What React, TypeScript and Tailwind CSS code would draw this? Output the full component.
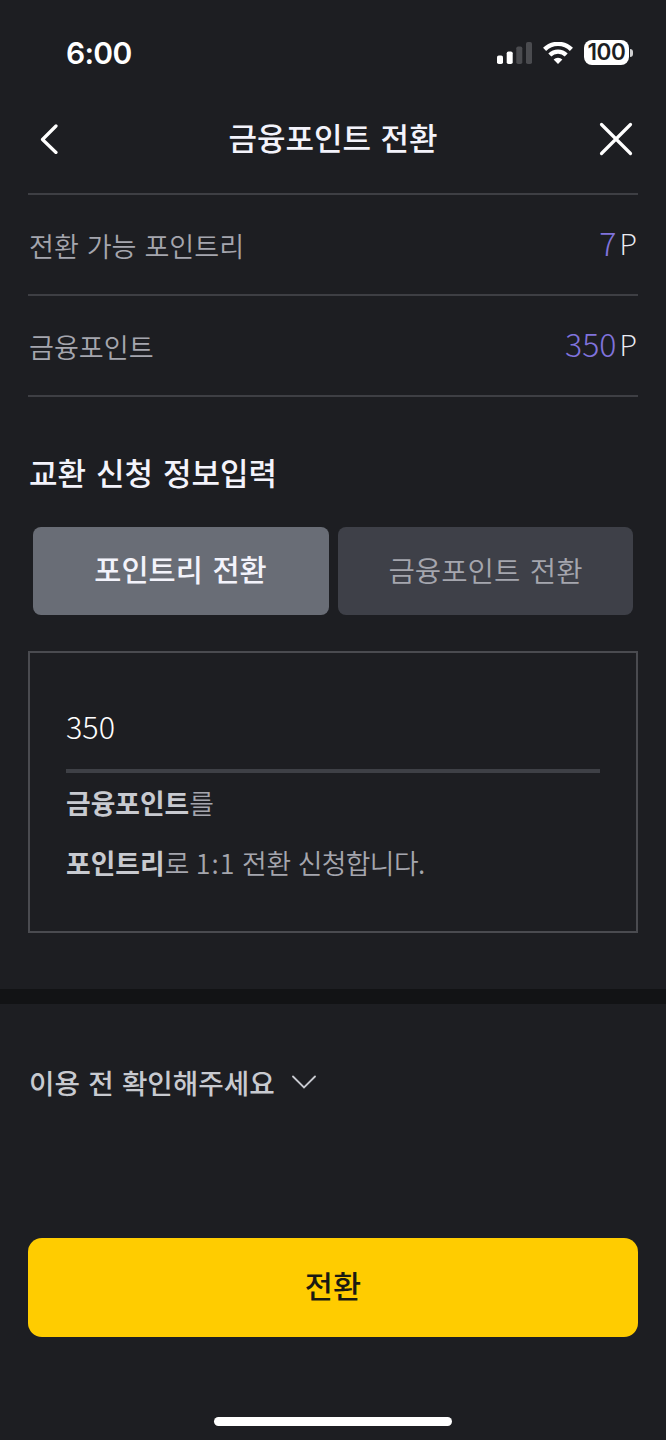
import { clsx } from 'clsx';
import { useState } from 'react';

const balances = [
  { label: '전환 가능 포인트리', value: '7' },
  { label: '금융포인트', value: '350' },
];

function StatusBar() {
  return (
    <div className="flex h-[84px] items-center justify-between pt-[21px] pr-[33px] pl-[66px]">
      <span className="font-['Inter'] text-[30px] leading-none font-semibold tracking-[-0.7px] text-white">6:00</span>
      <div className="flex items-center">
        <svg className="h-[22px] w-[35px]" viewBox="0 0 35 22">
          <rect x="0" y="13.5" width="6" height="8.5" rx="1.8" fill="#fff" />
          <rect x="9.7" y="9.5" width="6" height="12.5" rx="1.8" fill="#fff" />
          <rect x="19.3" y="4.5" width="6" height="17.5" rx="1.8" fill="#4a4b4f" />
          <rect x="29" y="0" width="6" height="22" rx="1.8" fill="#4a4b4f" />
        </svg>
        <svg className="ml-[11px] h-[22px] w-[30px]" viewBox="0 0 30 22" fill="none">
          <path d="M1.6 7.4a19 19 0 0 1 26.8 0" stroke="#fff" strokeWidth="4.4" />
          <path d="M6.8 13.1a11.6 11.6 0 0 1 16.4 0" stroke="#fff" strokeWidth="4.2" />
          <path d="M15 22l-4.4-4.4a6.2 6.2 0 0 1 8.8 0z" fill="#fff" />
        </svg>
        <div className="ml-[11px] flex h-[25px] w-[45px] items-center justify-center rounded-[8px] bg-white font-['Inter'] text-[22.5px] leading-none font-semibold tracking-[-0.4px] text-[#1d1e22]">
          100
        </div>
        <div className="ml-px h-[8px] w-[3px] rounded-r-full bg-[#d0d0d2]" />
      </div>
    </div>
  );
}

function Header() {
  return (
    <header className="flex h-[109px] items-center justify-between pr-[33px] pl-[40px]">
      <button aria-label="뒤로">
        <svg className="h-[30px] w-[26px]" viewBox="0 0 26 30" fill="none">
          <path d="M16 2L2.5 15.5L16 28.5" stroke="#fff" strokeWidth="3.2" strokeLinecap="round" strokeLinejoin="round" />
        </svg>
      </button>
      <h1 className="pb-[4px] pl-px text-[31px] leading-none font-medium [word-spacing:2.5px] text-[#f3f3fb]">
        금융포인트 전환
      </h1>
      <button aria-label="닫기">
        <svg className="h-[34px] w-[34px]" viewBox="0 0 34 34" fill="none">
          <path d="M2.5 2.5L31.5 31.5M31.5 2.5L2.5 31.5" stroke="#fff" strokeWidth="3.2" strokeLinecap="round" />
        </svg>
      </button>
    </header>
  );
}

export default function App() {
  const [tab, setTab] = useState(0);
  const tabs = ['포인트리 전환', '금융포인트 전환'];

  return (
    <div className="flex h-[1440px] w-[666px] flex-col overflow-hidden bg-[#1d1e22] font-['Noto_Sans_CJK_KR',sans-serif]">
      <StatusBar />
      <Header />

      {/* Balances */}
      <section className="mx-[28px] border-t-2 border-[#3e3f44]">
        {balances.map((item) => (
          <div key={item.label} className="flex h-[101px] items-center justify-between border-b-2 border-[#3e3f44]">
            <span className="pt-[3px] pl-px text-[27.1px] leading-none font-[350] [word-spacing:1.8px] text-[#a5a6ae]">
              {item.label}
            </span>
            <span className="flex items-baseline pr-px pb-[3px] leading-none">
              <span className="text-[32px] font-light text-[#8073dc]">{item.value}</span>
              <span className="relative -top-px ml-[3px] font-['Open_Sans'] text-[30px] font-[350] text-[#ececf2]">
                P
              </span>
            </span>
          </div>
        ))}
      </section>

      {/* Exchange form */}
      <section className="px-[28px] pt-[58px]">
        <h2 className="pl-px text-[31px] leading-[34px] font-medium [word-spacing:3px] text-[#f3f3fb]">
          교환 신청 정보입력
        </h2>
        <div className="mt-[38px] flex gap-[9px] px-[5px]">
          {tabs.map((name, i) => (
            <button
              key={name}
              onClick={() => setTab(i)}
              className={clsx(
                'h-[88px] flex-1 rounded-[8px] leading-none [word-spacing:3px]',
                tab === i
                  ? 'bg-[#696d76] pr-px pb-[4px] text-[29.5px] font-medium text-[#f3f3fb]'
                  : 'bg-[#3e4048] pb-[2px] text-[28.7px] font-[350] text-[#a5a6ae]',
              )}
            >
              {name}
            </button>
          ))}
        </div>

        <div className="mt-[36px] h-[282px] border-2 border-[#4a4b50] px-[36px] pt-[37px]">
          <div className="flex h-[83px] items-center border-b-4 border-[#3e4046] pb-[7px] text-[30.5px] leading-none font-light text-white">
            350
          </div>
          <p className="text-[26.8px] leading-[60px] font-[350] [word-spacing:0.5px] text-[#a5a6ae]">
            <b className="font-bold text-[#c8cad0]">금융포인트</b>를
            <br />
            <b className="font-bold text-[#c8cad0]">포인트리</b>로 <span className="tracking-[1px]">1:1</span> 전환{' '}
            <span className="tracking-[-0.6px]">신청합니다.</span>
          </p>
        </div>
      </section>

      <div className="mt-[56px] h-[15px] shrink-0 bg-[#121315]" />

      {/* Notice */}
      <div className="flex items-center px-[28px] pt-[61px]">
        <span className="pl-px text-[27.7px] leading-[34px] font-medium [word-spacing:2px] text-[#c8cad0]">
          이용 전 확인해주세요
        </span>
        <svg className="ml-[17px] h-[14px] w-[24px]" viewBox="0 0 24 14" fill="none">
          <path d="M1 1.5L12 12.5L23 1.5" stroke="#c8cad0" strokeWidth="1.8" strokeLinecap="round" />
        </svg>
      </div>

      <button className="mx-[28px] mt-[139px] h-[99px] shrink-0 rounded-[14px] bg-[#ffcc00] pb-[5px] text-[30.6px] leading-none font-medium text-[#1a1a12]">
        전환
      </button>

      {/* Home indicator */}
      <div className="mx-auto mt-[80px] h-[9px] w-[238px] shrink-0 rounded-full bg-white" />
    </div>
  );
}
